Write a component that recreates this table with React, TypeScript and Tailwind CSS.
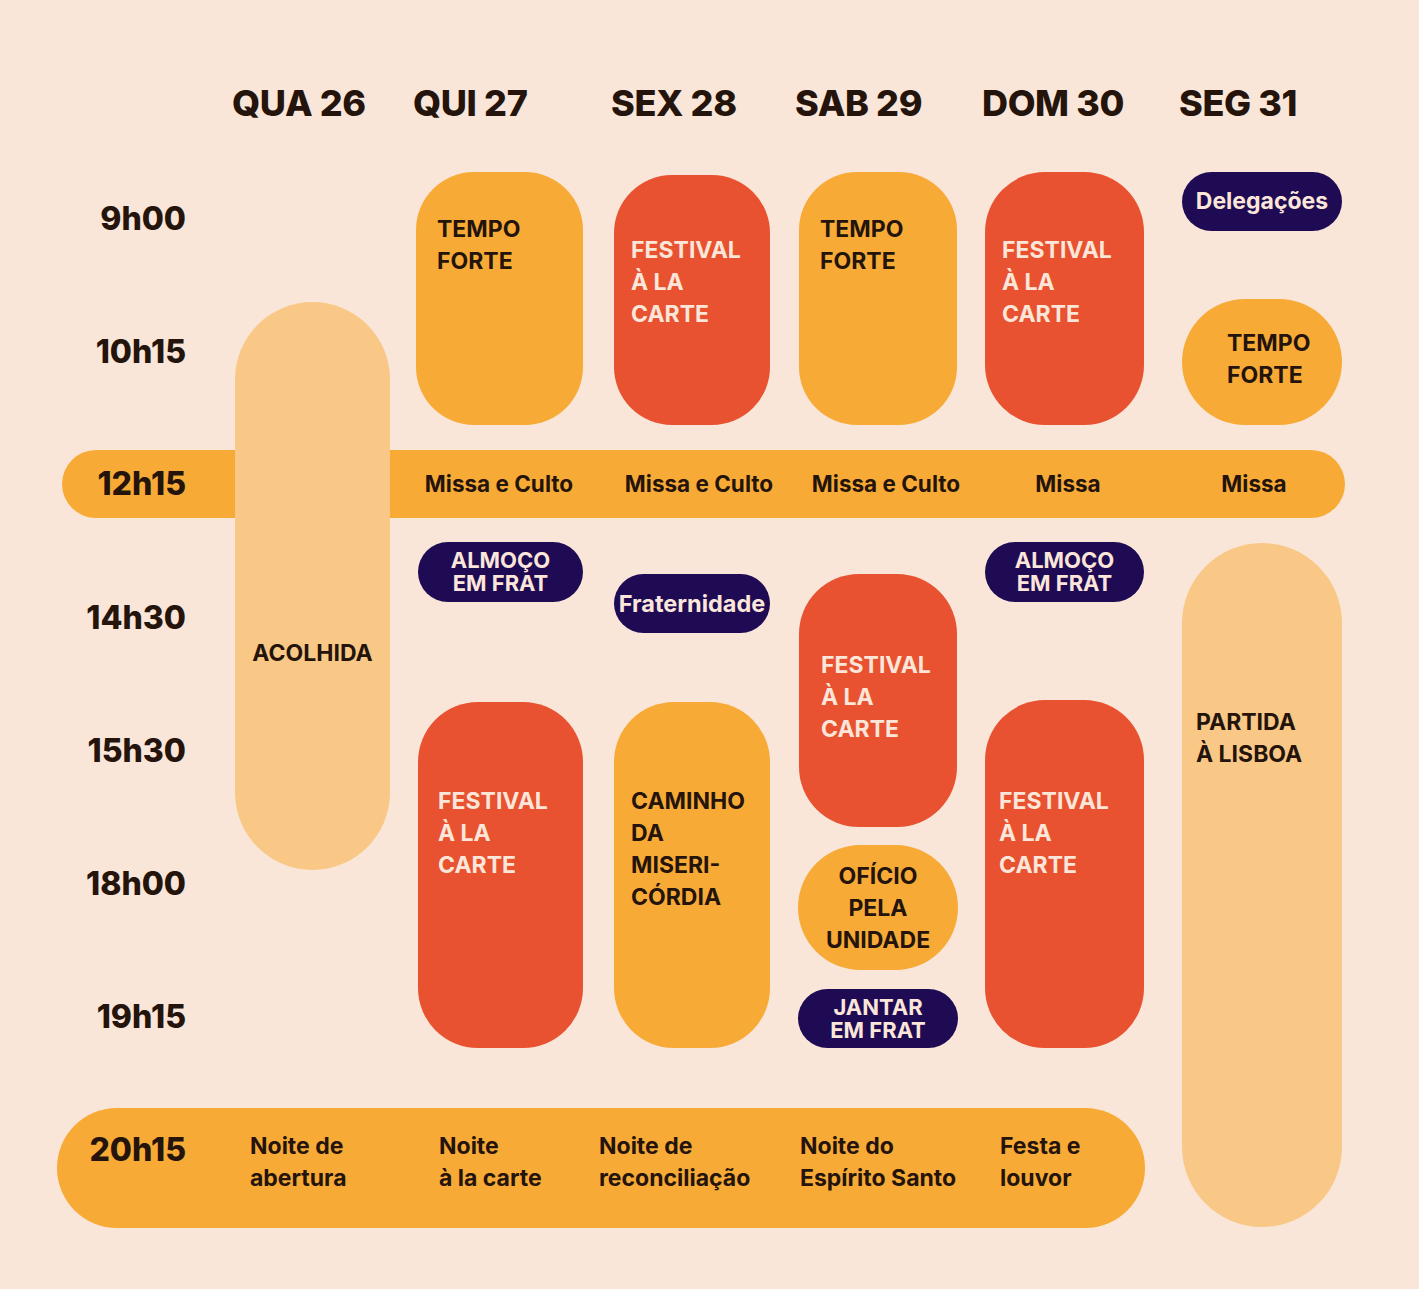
import type { ReactNode } from 'react'

type Tone = 'orange' | 'red' | 'light' | 'navy'

const tones: Record<Tone, string> = {
  orange: 'bg-[#f8aa36] text-[#24140c]',
  red: 'bg-[#e85230] text-[#fbe6d9]',
  light: 'bg-[#f9c886] text-[#24140c]',
  navy: 'bg-[#1f0b54] text-[#fbe6d9]',
}

function Block({ tone, className, children }: { tone: Tone; className: string; children: ReactNode }) {
  return (
    <div className={`${tones[tone]} shrink-0 font-bold text-[23px] leading-[32px] ${className}`}>
      {children}
    </div>
  )
}

// navy "meal" pills
function Tag({ className, children }: { className: string; children: ReactNode }) {
  return (
    <div
      className={`${tones.navy} shrink-0 rounded-full flex items-center justify-center text-center font-bold leading-[23px] ${className}`}
    >
      {children}
    </div>
  )
}

const days = ['QUA 26', 'QUI 27', 'SEX 28', 'SAB 29', 'DOM 30', 'SEG 31']
const dayCols = ['col-start-2', 'col-start-3', 'col-start-4', 'col-start-5', 'col-start-6', 'col-start-7']
const times = ['9h00', '10h15', '', '14h30', '15h30', '18h00', '19h15']

export default function App() {
  return (
    <div className="min-h-[1289px] w-[1419px] bg-[#f9e6d9] text-[#24140c] font-['Inter','Noto_Sans',sans-serif]">
      <div className="ml-[57px] grid grid-cols-[178px_181px_198px_184px_187px_197px_163px] grid-rows-[152px_auto]">
        {days.map((d, i) => (
          <div
            key={d}
            className={`${dayCols[i]} row-start-1 self-start mt-[81px] -ml-[3px] text-[36px] leading-[44px] font-extrabold tracking-[-0.01em]`}
          >
            {d}
          </div>
        ))}

        {/* time labels */}
        <div className="col-start-1 row-start-2 flex flex-col w-[129px]">
          {times.map((t, i) => (
            <div key={i} className="h-[133px] flex items-center justify-end text-[32px] font-extrabold">
              {t}
            </div>
          ))}
        </div>

        {/* 12h15 bar */}
        <div className="col-start-1 col-end-8 row-start-2 self-start mt-[298px] ml-[5px] h-[68px] rounded-full bg-[#f8aa36] flex items-center text-[22.5px] font-bold">
          <div className="w-[124px] text-right text-[32px] font-extrabold">12h15</div>
          <div className="w-[213px]" />
          <div className="w-[200px] text-center">Missa e Culto</div>
          <div className="w-[200px] text-center">Missa e Culto</div>
          <div className="w-[174px] text-center">Missa e Culto</div>
          <div className="w-[190px] text-center">Missa</div>
          <div className="w-[182px] text-center">Missa</div>
        </div>

        {/* 20h15 bar */}
        <div className="col-start-1 col-end-7 row-start-2 self-start justify-self-start mt-[956px] h-[120px] w-[1088px] rounded-full bg-[#f8aa36] flex items-start pt-[22px] text-[23px] leading-[32px] font-bold">
          <div className="w-[129px] text-right text-[32px] leading-[40px] font-extrabold">20h15</div>
          <div className="ml-[64px] w-[189px]">Noite de<br />abertura</div>
          <div className="w-[160px]">Noite<br />à la carte</div>
          <div className="w-[201px]">Noite de<br />reconciliação</div>
          <div className="w-[200px]">Noite do<br />Espírito Santo</div>
          <div>Festa e<br />louvor</div>
        </div>

        {/* QUA 26 */}
        <div className="col-start-2 row-start-2 flex flex-col">
          <Block tone="light" className="mt-[150px] h-[568px] w-[155px] rounded-full pt-[335px] text-center">
            ACOLHIDA
          </Block>
        </div>

        {/* QUI 27 */}
        <div className="col-start-3 row-start-2 flex flex-col">
          <Block tone="orange" className="mt-[20px] h-[253px] w-[167px] rounded-[58px] pt-[41px] pl-[21px]">
            TEMPO<br />FORTE
          </Block>
          <Tag className="mt-[117px] ml-[2px] h-[60px] w-[165px] text-[22px]">ALMOÇO<br />EM FRAT</Tag>
          <Block tone="red" className="mt-[100px] ml-[2px] h-[346px] w-[165px] rounded-[60px] pt-[83px] pl-[20px]">
            FESTIVAL<br />À LA<br />CARTE
          </Block>
        </div>

        {/* SEX 28 */}
        <div className="col-start-4 row-start-2 flex flex-col">
          <Block tone="red" className="mt-[23px] h-[250px] w-[156px] rounded-[58px] pt-[59px] pl-[17px]">
            FESTIVAL<br />À LA<br />CARTE
          </Block>
          <Tag className="mt-[149px] h-[59px] w-[156px] text-[23.5px]">Fraternidade</Tag>
          <Block tone="orange" className="mt-[69px] h-[346px] w-[156px] rounded-[60px] pt-[83px] pl-[17px]">
            CAMINHO<br />DA<br />MISERI-<br />CÓRDIA
          </Block>
        </div>

        {/* SAB 29 */}
        <div className="col-start-5 row-start-2 flex flex-col">
          <Block tone="orange" className="mt-[20px] ml-[1px] h-[253px] w-[158px] rounded-[58px] pt-[41px] pl-[21px]">
            TEMPO<br />FORTE
          </Block>
          <Block tone="red" className="mt-[149px] ml-[1px] h-[253px] w-[158px] rounded-[60px] pt-[75px] pl-[22px]">
            FESTIVAL<br />À LA<br />CARTE
          </Block>
          <Block tone="orange" className="mt-[18px] h-[125px] w-[160px] rounded-full flex items-center justify-center text-center">
            OFÍCIO<br />PELA<br />UNIDADE
          </Block>
          <Tag className="mt-[19px] h-[59px] w-[160px] text-[22px]">JANTAR<br />EM FRAT</Tag>
        </div>

        {/* DOM 30 */}
        <div className="col-start-6 row-start-2 flex flex-col">
          <Block tone="red" className="mt-[20px] h-[253px] w-[159px] rounded-[60px] pt-[62px] pl-[17px]">
            FESTIVAL<br />À LA<br />CARTE
          </Block>
          <Tag className="mt-[117px] h-[60px] w-[159px] text-[22px]">ALMOÇO<br />EM FRAT</Tag>
          <Block tone="red" className="mt-[98px] h-[348px] w-[159px] rounded-[60px] pt-[85px] pl-[14px]">
            FESTIVAL<br />À LA<br />CARTE
          </Block>
        </div>

        {/* SEG 31 */}
        <div className="col-start-7 row-start-2 flex flex-col">
          <Tag className="mt-[20px] h-[59px] w-[160px] text-[23px]">Delegações</Tag>
          <Block tone="orange" className="mt-[68px] h-[126px] w-[160px] rounded-full pt-[28px] pl-[45px]">
            TEMPO<br />FORTE
          </Block>
          <Block tone="light" className="mt-[118px] h-[684px] w-[160px] rounded-full pt-[163px] pl-[14px]">
            PARTIDA<br />À LISBOA
          </Block>
        </div>
      </div>
    </div>
  )
}
